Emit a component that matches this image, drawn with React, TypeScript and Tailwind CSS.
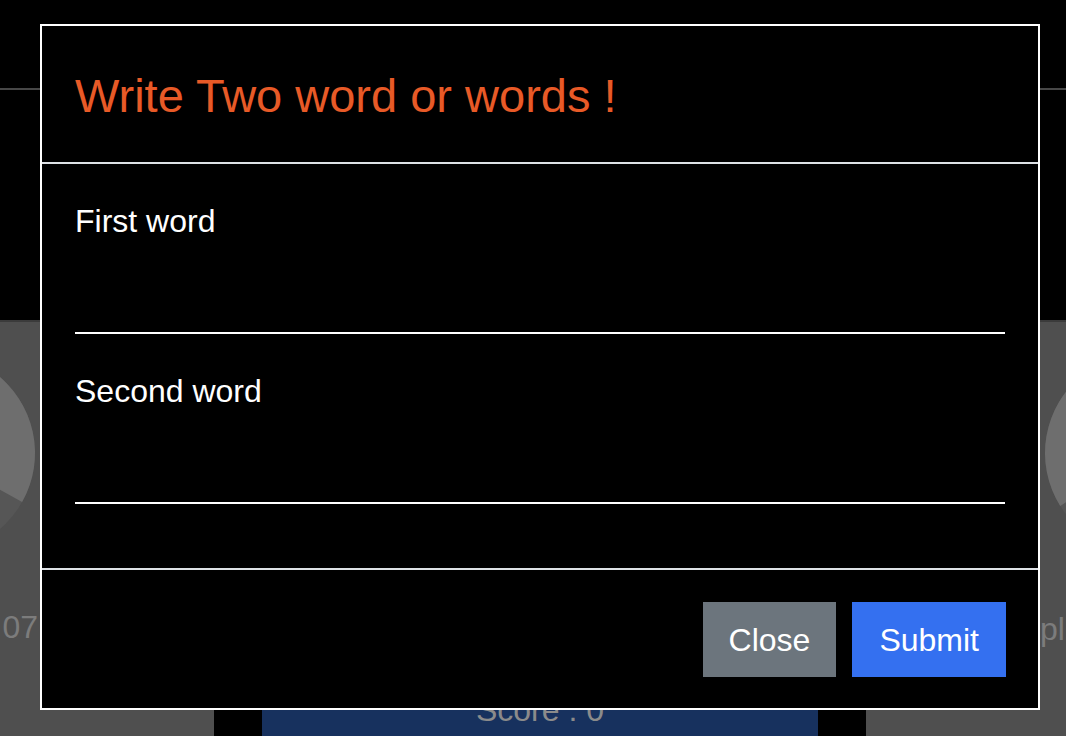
import React from 'react'

// pie slice from angle a0 to a1 (degrees, clockwise, 0 = right)
function slice(cx: number, cy: number, r: number, a0: number, a1: number) {
  const rad = (a: number) => (a * Math.PI) / 180
  const x0 = cx + r * Math.cos(rad(a0))
  const y0 = cy + r * Math.sin(rad(a0))
  const x1 = cx + r * Math.cos(rad(a1))
  const y1 = cy + r * Math.sin(rad(a1))
  const large = a1 - a0 > 180 ? 1 : 0
  return `M${cx} ${cy} L${x0} ${y0} A${r} ${r} 0 ${large} 1 ${x1} ${y1} Z`
}

function Pie({ cx, start, end }: { cx: number; start: number; end: number }) {
  return (
    <svg width="100%" height="240" className="block">
      <circle cx={cx} cy={131} r={100} fill="#565656" />
      <path d={slice(cx, 131, 100, start, end)} fill="#6e6e6e" />
    </svg>
  )
}

function Field({ label, first }: { label: string; first?: boolean }) {
  return (
    <div className={first ? '' : 'mt-[33px]'}>
      <label className="block text-[32px] leading-[48px] text-white">{label}</label>
      <input
        type="text"
        className="block w-full h-[89px] bg-transparent border-b-2 border-white text-[32px] text-white outline-none"
      />
    </div>
  )
}

export default function App() {
  return (
    <div className="relative w-full h-[736px] overflow-hidden bg-black font-['Liberation_Sans',Arial,sans-serif]">
      {/* page behind the modal */}
      <div className="h-[90px] border-b-2 border-[#474747]" />
      <div className="mt-[230px] flex h-[416px]">
        <div className="w-[214px] shrink-0 bg-[#4f4f4f] border-t-2 border-[#3b3b3b] flex flex-col overflow-hidden">
          <Pie cx={-65} start={-220.6} end={29.4} />
          <div className="mt-[49px] w-[38px] text-right text-[32px] leading-none text-[#7c7c7c]">07</div>
        </div>
        <div className="w-[48px] shrink-0" />
        <div className="w-[556px] shrink-0 flex flex-col justify-end">
          <div className="h-[60px] bg-[#17315e] pt-[18px] text-center text-[32px] leading-none text-[#8b8b8b]">
            Score : 0
          </div>
        </div>
        <div className="w-[48px] shrink-0" />
        <div className="w-[200px] shrink-0 bg-[#4f4f4f] border-t-2 border-[#3b3b3b] flex flex-col overflow-hidden">
          <Pie cx={279} start={148} end={398} />
          <div className="mt-[51px] pl-[174px] whitespace-nowrap text-[32px] leading-none text-[#7c7c7c]">pl</div>
        </div>
      </div>

      {/* modal */}
      <div className="absolute inset-0 pl-[40px] pt-[24px]">
        <div className="w-[1000px] h-[686px] bg-black border-2 border-white flex flex-col">
          <div className="h-[138px] shrink-0 border-b-2 border-[#dee2e6] px-[33px] pt-[42px]">
            <h5 className="text-[47px] leading-[56px] text-[#e85a27]">Write Two word or words !</h5>
          </div>
          <div className="h-[404px] shrink-0 px-[33px] pt-[33px]">
            <Field label="First word" first />
            <Field label="Second word" />
          </div>
          <div className="flex-1 border-t-2 border-[#dee2e6] flex justify-end items-start gap-[16px] pt-[32px] pr-[32px]">
            <button className="h-[75px] px-[26px] bg-[#6c757d] text-[32px] text-white">Close</button>
            <button className="h-[75px] px-[27px] bg-[#3470f0] text-[32px] text-white">Submit</button>
          </div>
        </div>
      </div>
    </div>
  )
}
